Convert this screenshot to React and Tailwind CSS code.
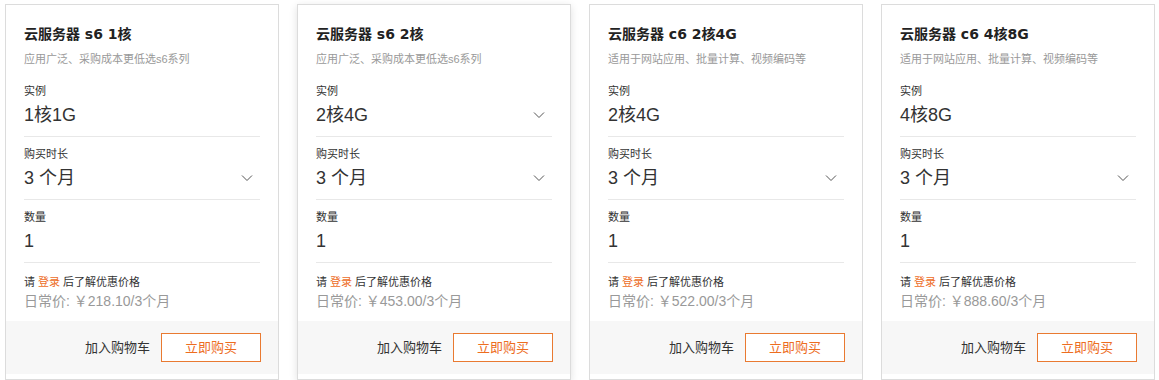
import React from 'react';

const cards = [
  {
    title: '云服务器 s6 1核',
    desc: '应用广泛、采购成本更低选s6系列',
    spec: '1核1G',
    specSelect: false,
    price: '￥218.10/3个月',
  },
  {
    title: '云服务器 s6 2核',
    desc: '应用广泛、采购成本更低选s6系列',
    spec: '2核4G',
    specSelect: true,
    price: '￥453.00/3个月',
    active: true,
  },
  {
    title: '云服务器 c6 2核4G',
    desc: '适用于网站应用、批量计算、视频编码等',
    spec: '2核4G',
    specSelect: false,
    price: '￥522.00/3个月',
  },
  {
    title: '云服务器 c6 4核8G',
    desc: '适用于网站应用、批量计算、视频编码等',
    spec: '4核8G',
    specSelect: false,
    price: '￥888.60/3个月',
  },
];

const Chevron = () => (
  <svg width="12" height="8" viewBox="0 0 12 8" fill="none" className="mr-[7px]">
    <polyline points="1,1.5 6,6.5 11,1.5" stroke="#555" strokeWidth="1" />
  </svg>
);

const Field = ({ label, value, select, first }) => (
  <div className={`pt-[8px] pb-[8px] border-b border-[#e8e8e8] ${first ? 'mt-[6px]' : ''}`}>
    <div className="text-[11px] leading-[18px] text-[#333]">{label}</div>
    <div className="mt-[2px] flex items-center justify-between">
      <span className="text-[18px] leading-[26px] text-[#333]">{value}</span>
      {select && <Chevron />}
    </div>
  </div>
);

const Card = ({ card }) => (
  <div
    className={`w-[274px] shrink-0 flex flex-col bg-white border border-[#dcdcdc] ${
      card.active ? 'shadow-[0_2px_8px_rgba(0,0,0,0.12)]' : ''
    }`}
  >
    <div className="px-[18px] pt-[19px] pb-[10px]">
      <div
        className="text-[14px] leading-[20px] font-bold text-[#222]"
        style={{ fontFamily: '"DejaVu Sans", "Noto Sans CJK SC", sans-serif' }}
      >
        {card.title}
      </div>
      <div className="mt-[6px] text-[11px] leading-[18px] text-[#999]">{card.desc}</div>
      <Field label="实例" value={card.spec} select={card.specSelect} first />
      <Field label="购买时长" value="3 个月" select />
      <Field label="数量" value="1" />
      <div className="mt-[10px] text-[11px] leading-[18px] text-[#333]">
        请 <span className="text-[#ed6d1f]">登录</span> 后了解优惠价格
      </div>
      <div className="text-[14px] leading-[20px] text-[#999]">日常价: {card.price}</div>
    </div>
    <div className="bg-[#f7f7f7] flex items-center justify-end gap-[11px] px-[17px] h-[53px]">
      <span className="text-[13px] text-[#333]">加入购物车</span>
      <button className="w-[100px] h-[29px] border border-[#e97a31] bg-white text-[13px] text-[#ed6d1f]">
        立即购买
      </button>
    </div>
  </div>
);

export default function App() {
  return (
    <div
      className="w-[1159px] h-[380px] bg-white flex gap-[18px] pl-[5px] pt-[4px]"
      style={{ fontFamily: '"Liberation Sans", "Noto Sans CJK SC", sans-serif' }}
    >
      {cards.map((c, i) => (
        <Card key={i} card={c} />
      ))}
    </div>
  );
}
